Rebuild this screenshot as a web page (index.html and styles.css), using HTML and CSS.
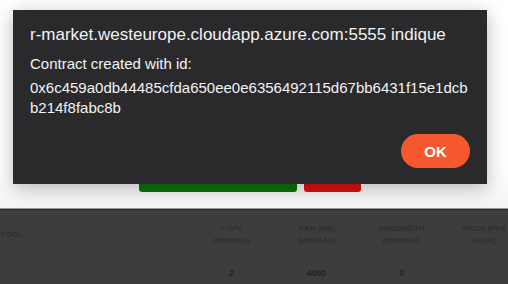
FILE: index.html
```html
<!DOCTYPE html>
<html>
<head>
<meta charset="utf-8">
<link rel="stylesheet" href="styles.css">
</head>
<body>
<div class="page">
  <div class="actions">
    <div class="btn btn-green"></div>
    <div class="btn btn-red"></div>
  </div>
  <div class="table">
    <div class="cell head pool">POOL</div>
    <div class="cell head"># CPU<br>(MIN/MAX)</div>
    <div class="cell head">RAM (MB)<br>(MIN/MAX)</div>
    <div class="cell head">BANDWIDTH<br>(MIN/MAX)</div>
    <div class="cell head">PRICE (PER<br>HOUR)</div>
    <div class="cell val"></div>
    <div class="cell val">2</div>
    <div class="cell val">4000</div>
    <div class="cell val">0</div>
    <div class="cell val"></div>
  </div>
</div>
<div class="dialog">
  <div class="title">r-market.westeurope.cloudapp.azure.com:5555 indique</div>
  <div class="msg">Contract created with id:</div>
  <div class="msg id">0x6c459a0db44485cfda650ee0e6356492115d67bb6431f15e1dcbb214f8fabc8b</div>
  <div class="footer"><button class="ok">OK</button></div>
</div>
</body>
</html>
```
FILE: styles.css
```css
html, body {
  margin: 0;
  padding: 0;
  background: #ffffff;
  font-family: "Liberation Sans", Arial, sans-serif;
  width: 508px;
  height: 284px;
  overflow: hidden;
}
.page {
  display: flex;
  flex-direction: column;
}
.actions {
  height: 209px;
  display: flex;
  align-items: flex-end;
  padding: 0 0 17px 139px;
  box-sizing: border-box;
  gap: 7px;
  background: linear-gradient(#ffffff 80%, #f4f4f4);
}
.btn {
  height: 36px;
  border-radius: 3px;
}
.btn-green {
  width: 158px;
  background: #0a730c;
}
.btn-red {
  width: 57px;
  background: #dd1010;
}
.table {
  border-top: 1px solid #2a2a2a;
  box-shadow: 0 -1px 0 #9a9a9a;
  background: #3d3d3d;
  height: 74px;
  display: grid;
  grid-template-columns: 189px 85px 85px 85px 80px;
  grid-template-rows: 48px 26px;
}
.cell {
  display: flex;
  align-items: center;
  justify-content: center;
  text-align: center;
  font-weight: bold;
  white-space: nowrap;
}
.head {
  font-size: 7.5px;
  line-height: 12px;
  color: #2f2f2f;
  padding-top: 2px;
}
.head.pool {
  justify-content: flex-start;
  padding-left: 1px;
}
.val {
  font-size: 8.5px;
  color: #222222;
  align-items: flex-start;
  padding-top: 10px;
}
.dialog {
  position: absolute;
  left: 13px;
  top: 10px;
  width: 474px;
  height: 174px;
  box-sizing: border-box;
  padding: 14px 17px 16px 17px;
  background: #2a2a2d;
  color: #f2f2f2;
  box-shadow: 0 4px 18px rgba(0, 0, 0, 0.28);
  display: flex;
  flex-direction: column;
}
.title {
  font-size: 17px;
  line-height: 21px;
  margin-bottom: 9px;
}
.msg {
  font-size: 15px;
  line-height: 20px;
}
.id {
  word-break: break-all;
  margin-top: 4px;
}
.footer {
  margin-top: auto;
  display: flex;
  justify-content: flex-end;
}
.ok {
  width: 69px;
  height: 34px;
  border: none;
  border-radius: 17px;
  background: #f5582e;
  color: #ffffff;
  font-family: "Liberation Sans", Arial, sans-serif;
  font-weight: bold;
  font-size: 15px;
  padding: 0;
}
```
